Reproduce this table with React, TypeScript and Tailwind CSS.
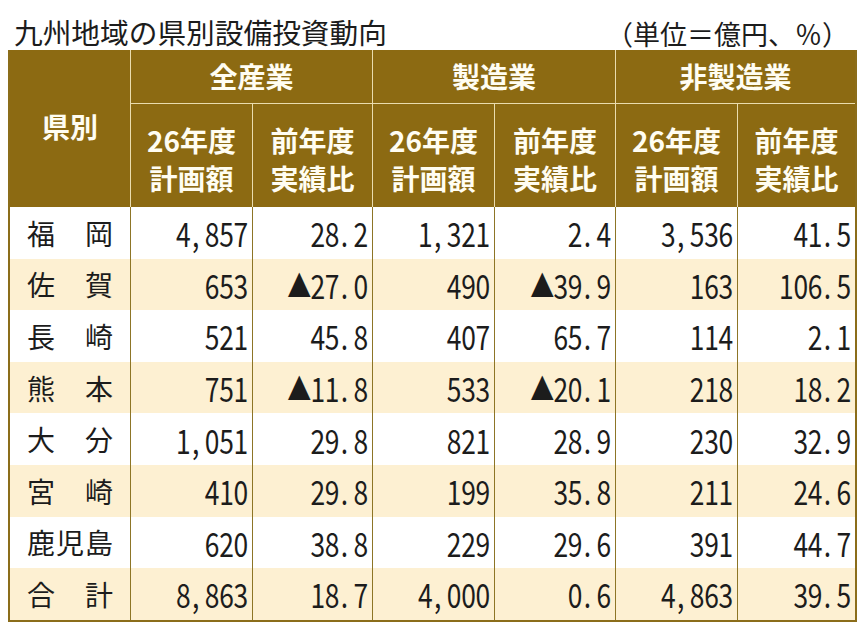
import React from "react";

const rows: string[][] = [
  ["福岡", "4,857", "28.2", "1,321", "2.4", "3,536", "41.5"],
  ["佐賀", "653", "▲27.0", "490", "▲39.9", "163", "106.5"],
  ["長崎", "521", "45.8", "407", "65.7", "114", "2.1"],
  ["熊本", "751", "▲11.8", "533", "▲20.1", "218", "18.2"],
  ["大分", "1,051", "29.8", "821", "28.9", "230", "32.9"],
  ["宮崎", "410", "29.8", "199", "35.8", "211", "24.6"],
  ["鹿児島", "620", "38.8", "229", "29.6", "391", "44.7"],
  ["合計", "8,863", "18.7", "4,000", "0.6", "4,863", "39.5"],
];

function Num({ v }: { v: string }) {
  return (
    <span className="inline-flex origin-right scale-x-[0.8] leading-none">
      {v.split("").map((c, i) =>
        c === "▲" ? (
          <span key={i} className="w-[29px] text-center text-[30px]">
            {c}
          </span>
        ) : c === "." || c === "," ? (
          <span key={i} className="w-[18px] pl-[2px] text-left">
            {c}
          </span>
        ) : (
          <span key={i} className="w-[18px] text-center">
            {c}
          </span>
        )
      )}
    </span>
  );
}

const font = "font-['Noto_Sans_CJK_JP',sans-serif]";

export default function App() {
  return (
    <div className={`w-[867px] h-[630px] bg-white ${font} text-[#1c1c1c]`}>
      <div className="flex h-[50px] items-end justify-between pl-[14px] pr-[18px] pb-[3px]">
        <div className="text-[28.7px] font-normal leading-none">九州地域の県別設備投資動向</div>
        <div className="text-[27px] leading-none">（単位＝億円、％）</div>
      </div>
      <div className="ml-[8px] w-[849px] border-x-2 border-b-2 border-[#8b6d1a]">
        <div className="grid grid-cols-[120px_122px_120px_122px_121px_122px_1fr] grid-rows-[53px_104px] bg-[#8c6a12] font-bold text-[28px] text-[#fffdf2]">
          <div className="row-span-2 flex items-center justify-center pb-[6px]">県別</div>
          <div className="col-span-2 flex items-center justify-center border-l border-[#eadcae] pb-[2px]">全産業</div>
          <div className="col-span-2 flex items-center justify-center border-l border-[#eadcae] pb-[2px]">製造業</div>
          <div className="col-span-2 flex items-center justify-center border-l border-[#eadcae] pb-[2px]">非製造業</div>
          {[0, 1, 2].map((g) => (
            <React.Fragment key={g}>
              <div className="flex flex-col items-center justify-center border-l border-t border-[#eadcae] pt-[6px] leading-[38px]">
                <span>26年度</span>
                <span>計画額</span>
              </div>
              <div className="flex flex-col items-center justify-center border-l border-t border-[#eadcae] pt-[6px] leading-[38px]">
                <span>前年度</span>
                <span>実績比</span>
              </div>
            </React.Fragment>
          ))}
        </div>
        {rows.map((r, ri) => (
          <div
            key={ri}
            className={`grid h-[51.6px] grid-cols-[120px_122px_120px_122px_121px_122px_1fr] ${
              ri % 2 === 1 ? "bg-[#fdf0d2]" : "bg-white"
            }`}
          >
            <div className="flex items-center justify-between px-[17px] text-[28px] leading-none">
              {r[0].split("").map((c, i) => (
                <span key={i}>{c}</span>
              ))}
            </div>
            {r.slice(1).map((v, ci) => (
              <div
                key={ci}
                className="flex items-center justify-end border-l border-[#8d7526] pr-[4px] pt-[2px] text-[33px]"
              >
                <Num v={v} />
              </div>
            ))}
          </div>
        ))}
      </div>
    </div>
  );
}
